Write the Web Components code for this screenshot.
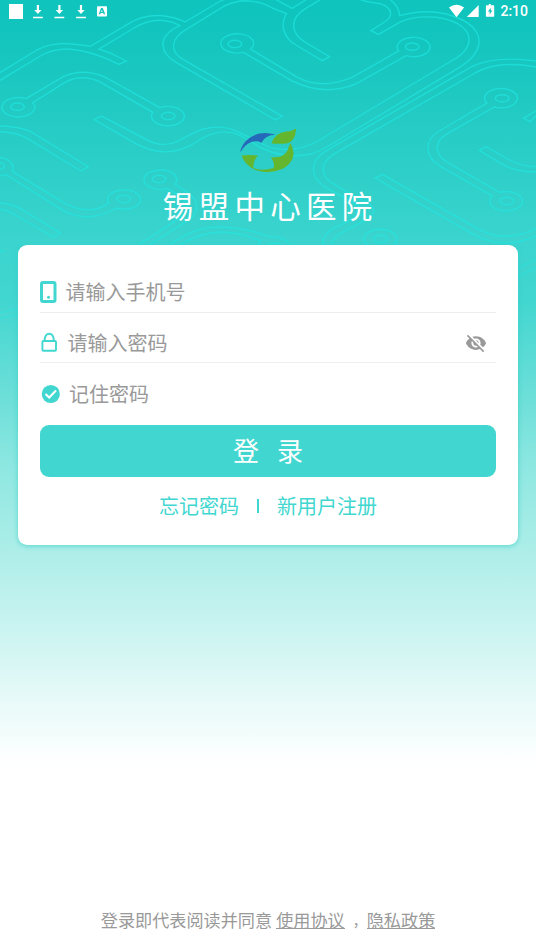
<!DOCTYPE html>
<html lang="zh-CN">
<head>
<meta charset="utf-8">
<title>锡盟中心医院</title>
<style>
html,body{margin:0;height:100%;overflow:hidden}
body{font-family:"Noto Sans CJK SC",sans-serif;color:#999}
</style>
</head>
<body>
<login-page></login-page>
<script>
function define(name, html) {
  const t = document.createElement('template');
  t.innerHTML = html;
  customElements.define(name, class extends HTMLElement {
    constructor() {
      super();
      this.attachShadow({mode: 'open'}).appendChild(t.content.cloneNode(true));
    }
  });
}

define('circuit-pattern', `
<style>:host{display:block;position:absolute;inset:0}svg{display:block}</style>
<svg width="536" height="340" fill="none" stroke="#21e8e3" stroke-opacity=".62" stroke-width="4.3">
<g transform="scale(.34184 .33333)">
<path d="M-5,221L108,150Q150,128 200,131Q235,133 264,139L378,70Q420,43 475,47Q515,51 541,66L640,6Q655,-3 680,-8"/>
<path d="M-5,244L118,168Q155,146 200,147Q270,152 348,193L370,183Q330,160 290,147L392,84Q430,60 470,61Q505,64 526,77C462,107 462,155 515,187L806,360L826,349L535,178C497,155 497,116 545,88L645,25Q680,2 718,2Q765,4 796,24L838,41C820,70 825,112 870,138L943,182L964,170L890,125C848,98 848,52 895,25L940,-3"/>
<path d="M800,-5L855,25L902,-5"/>
<path d="M1052,-2C1080,10 1090,5 1115,12C1150,25 1150,50 1125,66L1085,92L1107,103L1173,65Q1215,46 1275,52C1380,65 1405,135 1325,180L930,423Q865,460 790,443L700,397Q650,372 595,387Q570,395 520,424Q475,444 430,420L297,348L275,359L405,435Q485,475 560,435L595,413Q650,383 700,405L765,444Q835,478 910,462Q935,455 1000,414L1344,202C1412,160 1425,100 1353,60Q1270,18 1169,47Q1168,18 1139,-3"/>
<path d="M1573,184Q1450,165 1380,200L950,455C906,484 906,532 950,560L1055,621C1082,638 1060,646 1040,653L985,680C950,700 943,715 944,737"/>
<path d="M1573,202Q1460,180 1395,216L975,463C935,490 935,530 980,555L1080,612C1110,635 1085,650 1060,665L1005,695C980,710 972,718 970,737"/>
<path d="M76,296L185,230Q245,202 310,233L468,323A48 29 0 1 1 447,337L295,247Q240,220 190,247L96,308A48 29 0 1 1 76,296Z"/>
<path d="M733,147L870,232Q940,270 1030,232L1166,153A48 29 0 1 1 1188,167L1040,252Q950,290 855,243L712,157A48 29 0 1 1 733,147Z"/>
<path d="M1446,321L1305,403C1270,425 1270,463 1310,488L1461,577A48 29 0 1 1 1440,588L1290,500C1240,470 1240,420 1285,393L1424,309A48 29 0 1 1 1446,321Z"/>
<path d="M1573,500Q1525,500 1490,480L1422,440L1402,451L1465,490Q1510,518 1573,515M1573,343L1550,365L1531,355L1573,330"/>
<path d="M1573,683Q1480,733 1398,687L1119,523L1098,534L1380,700Q1475,755 1573,705"/>
<path d="M435,735L545,665C585,640 585,600 545,575L512,552A48 29 0 1 0 490,565L520,585C560,610 555,635 525,655L405,735"/>
<path d="M36,514L190,610Q255,643 300,620L319,610A48 29 0 1 1 340,624Q265,670 190,635L18,524Q-5,530 -20,525M36,514Q46,490 15,476L-5,471M-5,488Q13,488 13,498T-5,508"/>
<path d="M-5,378Q50,378 90,395L258,500L237,513L75,412Q40,395 -5,395M-5,608Q40,612 70,632L176,699L155,711L50,648Q30,632 -5,627M-5,748L12,757"/>
<path d="M495,735Q570,680 640,681Q720,682 785,710Q835,708 849,737M525,735Q590,696 650,696Q710,698 762,723L752,737M783,737Q805,720 825,737"/>
<ellipse cx="1113" cy="717" rx="48" ry="29"/>
<g><ellipse cx="51" cy="320" rx="20" ry="11"/><ellipse cx="492" cy="348" rx="20" ry="11"/><ellipse cx="687" cy="132" rx="20" ry="11"/><ellipse cx="1206" cy="140" rx="20" ry="11"/><ellipse cx="1469" cy="295" rx="20" ry="11"/><ellipse cx="1483" cy="603" rx="20" ry="11"/><ellipse cx="465" cy="537" rx="20" ry="11"/><ellipse cx="362" cy="597" rx="20" ry="11"/><ellipse cx="1113" cy="717" rx="20" ry="11"/></g>
<path stroke-opacity=".4" d="M-5,939L60,925M-5,957L60,940M1573,775L1510,807M1573,800L1510,832"/>
</g>
</svg>`);

define('status-bar', `
<style>
:host{display:flex;align-items:center;height:23px;padding:0 8px 0 9px;position:relative;color:#fff;font:500 14px/23px Roboto,sans-serif}
svg{display:block;fill:#fff}.sp{flex:1}
</style>
<svg width="100" height="23"><path d="M0 4h14v15H0zM27.800 4.900h2.200v5.100h2.600l-3.700 4-3.700-4h2.600zM24 16.700h9.800v1.500H24zM49.300 4.900h2.200v5.100h2.600l-3.700 4-3.700-4h2.600zM45.500 16.700h9.800v1.500h-9.800zM70.900 4.900h2.200v5.100h2.600l-3.700 4-3.700-4h2.600zM67.100 16.700h9.800v1.500h-9.800z"/><path fill-rule="evenodd" d="M89 6.200h8q1 0 1 1v8.400q0 1-1 1h-8q-1 0-1-1V7.200q0-1 1-1zm3.100 1.900-2.400 6.200h1.500l.5-1.300h2.500l.5 1.300h1.500l-2.400-6.200zm.8 1.700.8 2.100h-1.600z"/></svg>
<div class="sp"></div>
<svg width="51" height="23"><path d="M0 7.500Q7.500 2 15.100 7.500L7.500 17.200zM29.700 5v12H17.800z"/><path fill-rule="evenodd" d="M39.800 4h2v1.200h2.500q.9 0 .9.900v9.800q0 .9-.9.900h-6.500q-.9 0-.9-.9V6.100q0-.9.900-.9h2zm2 3.900-3 3.700h1.800v2.800l2.800-3.900h-1.600z"/></svg>
<span>2:10</span>`);

define('hospital-brand', `
<style>
:host{display:flex;flex-direction:column;align-items:center;height:205px;box-sizing:border-box;padding-top:104px;color:#fff;position:relative}
svg{display:block;flex:none}
h1{margin:8px 0 0;padding-left:4.500px;font-weight:400;font-size:30.500px;line-height:48px;letter-spacing:5.300px}
</style>
<svg width="58" height="46" viewBox="0 0 58 46">
<path fill="#2668b9" d="M1.300 25.500C2.500 13.500 16 5.200 28 6.200Q33 6.200 36.500 7.800Q26 8 22.300 15.900C18.500 13.500 15 14.300 13 14.700Q6 17 1.300 25.500z"/>
<path fill="#65b62f" d="M32.500 16.500Q36 5.500 47.500 4.500Q53.500 4 57.200 1.500Q56.200 15 47.500 16.600Q42.500 17 32.500 16.500zM51.500 16Q57.500 27 51.800 34.800C43 47 23 47 13.200 41.200Q5.300 36.500 2.500 28.500Q10 27.500 19 28.500C15 33 14 37 14.600 41Q24 44.500 34.500 41C36 37 34 33 31.600 30.500Q47 31 49.300 21Q50.500 18 51.500 16z"/>
</svg>
<h1><slot></slot></h1>`);

define('form-row', `
<style>
:host{display:flex;align-items:center;height:50px;box-sizing:border-box;padding-top:9px;font-size:20px;line-height:28px}
:host([line]){border-bottom:1px solid #eee}
.t{flex:1;color:#999}
.i{width:var(--gap,26px);height:24px;flex:none}
::slotted(svg){display:block}
</style>
<div class="i"><slot name="icon"></slot></div><div class="t"><slot></slot></div><slot name="end"></slot>`);

define('primary-button', `
<style>
:host{display:block;margin-top:6px}
button{display:flex;justify-content:center;align-items:center;width:100%;height:52px;border:0;border-radius:9px;background:#41d7d0;color:#fff;font:26px/50px "Noto Sans CJK SC",sans-serif;gap:18px;padding:0 0 1px;margin:0}
</style>
<button><slot></slot></button>`);

define('text-links', `
<style>
:host{display:flex;justify-content:center;align-items:center;height:59px;color:#41d7d0;font-size:20px;line-height:30px}
i{width:2px;height:14px;background:currentColor;margin:0 18px}
</style>
<slot name="a"></slot><i></i><slot name="b"></slot>`);

define('login-card', `
<style>
:host{display:block;position:relative;box-sizing:border-box;margin:16.500px 18px 0;height:300.500px;padding:18px 22px 0;background:#fff;border-radius:9px;box-shadow:0 1px 5px rgba(50,205,198,.7)}
</style><slot></slot>`);

define('agreement-line', `
<style>
:host{display:flex;justify-content:center;font-size:17.150px;line-height:26px;color:#999;white-space:pre}
u{text-decoration:none;border-bottom:1px solid #999;height:21px;line-height:26px}
.c{width:22px;box-sizing:border-box;padding-left:8px;font-size:14px}
</style><span>登录即代表阅读并同意</span><span style="width:4px"></span><u>使用协议</u><span class="c">，</span><u>隐私政策</u>`);

define('login-page', `
<style>
:host{display:flex;flex-direction:column;position:relative;width:536px;height:952px;overflow:hidden;
background:linear-gradient(#0ec4bc 0,#13c5be 40px,#24cbc4 120px,#3bd4ce 240px,#42d6d0 300px,#6edfd9 400px,#8de7e1 465px,#abede8 545px,#d0f5f2 645px,#e8faf9 702px,#fff 765px)}
.grow{flex:1}
agreement-line{margin-bottom:19px}
</style>
<circuit-pattern></circuit-pattern>
<status-bar></status-bar>
<hospital-brand>锡盟中心医院</hospital-brand>
<login-card>
<form-row line style="--gap:25.500px"><svg slot="icon" width="18" height="24" fill="none" stroke="#41d7d0"><rect x="1.500" y="2.500" width="13.500" height="19" rx="1.500" stroke-width="3"/><circle cx="8.500" cy="17.300" r="1.500" fill="#41d7d0" stroke="none"/></svg>请输入手机号</form-row>
<form-row line style="--gap:27.500px;padding-top:11px"><svg slot="icon" width="19" height="24" fill="none" stroke="#41d7d0" stroke-width="1.900"><rect x="2.400" y="10" width="13.600" height="9.800" rx="1"/><path d="M4.700 10V8Q5.500 2.800 9.200 2.800Q13 2.800 13.700 8v2"/></svg>请输入密码<svg slot="end" style="margin-right:9px" width="22" height="22" viewBox="0 0 24 24" fill="#999"><path d="M12 7c2.760 0 5 2.240 5 5 0 .65-.13 1.260-.36 1.830l2.920 2.920c1.510-1.260 2.700-2.890 3.430-4.750-1.730-4.390-6-7.500-11-7.500-1.400 0-2.740.25-3.980.7l2.160 2.160C10.740 7.130 11.350 7 12 7zM2 4.270l2.280 2.280.46.46C3.080 8.300 1.780 10.020 1 12c1.730 4.390 6 7.500 11 7.500 1.550 0 3.030-.3 4.380-.84l.42.42L19.730 22 21 20.730 3.270 3 2 4.270zM7.530 9.800l1.550 1.550c-.05.21-.08.43-.08.65 0 1.660 1.340 3 3 3 .22 0 .44-.03.65-.08l1.550 1.550c-.67.33-1.410.53-2.200.53-2.760 0-5-2.240-5-5 0-.79.2-1.530.53-2.200zm4.310-.78l3.150 3.150.02-.16c0-1.660-1.340-3-3-3l-.17.010z"/></svg></form-row>
<form-row style="--gap:29px;height:56px;padding-top:7px"><svg slot="icon" width="22" height="24"><circle cx="10.800" cy="12" r="9.100" fill="#41d7d0"/><path d="M5.500 12l3.700 3.500 6.800-7" fill="none" stroke="#fff" stroke-width="2"/></svg>记住密码</form-row>
<primary-button><span>登</span><span>录</span></primary-button>
<text-links><span slot="a">忘记密码</span><span slot="b">新用户注册</span></text-links>
</login-card>
<div class="grow"></div>
<agreement-line></agreement-line>`);
</script>
</body>
</html>
